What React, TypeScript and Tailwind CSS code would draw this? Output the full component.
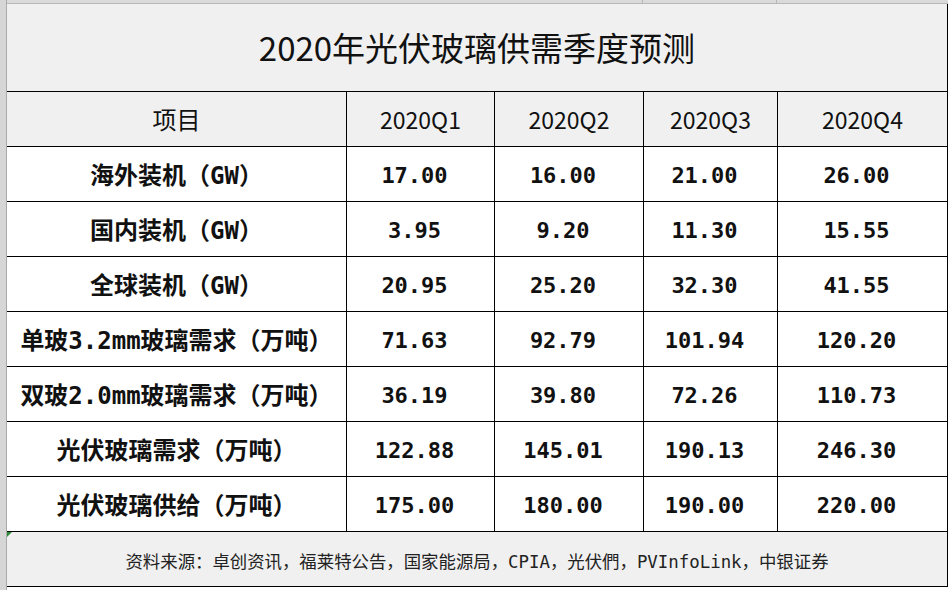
const cols = ['w-[340px]', 'w-[148px]', 'w-[149px]', 'w-[134px]', 'w-[170px]']

const quarters = ['2020Q1', '2020Q2', '2020Q3', '2020Q4']

const rows: [string, string[]][] = [
  ['海外装机（GW）', ['17.00', '16.00', '21.00', '26.00']],
  ['国内装机（GW）', ['3.95', '9.20', '11.30', '15.55']],
  ['全球装机（GW）', ['20.95', '25.20', '32.30', '41.55']],
  ['单玻3.2mm玻璃需求（万吨）', ['71.63', '92.79', '101.94', '120.20']],
  ['双玻2.0mm玻璃需求（万吨）', ['36.19', '39.80', '72.26', '110.73']],
  ['光伏玻璃需求（万吨）', ['122.88', '145.01', '190.13', '246.30']],
  ['光伏玻璃供给（万吨）', ['175.00', '180.00', '190.00', '220.00']],
]

const sans = "font-['Noto_Sans_CJK_SC',sans-serif]"
const mono = "font-['DejaVu_Sans_Mono','Noto_Sans_CJK_SC',monospace]"

export default function App() {
  return (
    <div className="w-[952px] h-[590px] bg-white flex overflow-hidden text-[#111]">
      {/* row header strip */}
      <div className="w-[7px] h-full bg-[#d6d6d6] border-r border-[#aaaaaa]" />

      <div className="w-[941px] flex flex-col">
        <div className="h-[4px] bg-[#dadada] border-b border-[#b8b8b8] flex">
          <div className="w-[636px] border-r border-[#b8b8b8]" />
          <div className="w-[134px] border-r border-[#b8b8b8]" />
        </div>

        {/* title */}
        <div
          className={`h-[88px] bg-[#f0f0f0] border-b border-r border-black flex items-center justify-center text-[33px] ${sans}`}
        >
          2020年光伏玻璃供需季度预测
        </div>

        {/* header */}
        <div className="h-[55px] flex bg-[#f0f0f0] border-b border-black">
          <div className={`${cols[0]} border-r border-black flex items-center justify-center text-[24px] ${sans}`}>
            项目
          </div>
          {quarters.map((q, i) => (
            <div
              key={q}
              className={`${cols[i + 1]} border-r border-black flex items-center justify-center text-[23px] ${sans}`}
            >
              {q}
            </div>
          ))}
        </div>

        {rows.map(([label, vals]) => (
          <div key={label} className="h-[55px] flex bg-white border-b border-black">
            <div
              className={`${cols[0]} border-r border-black flex items-center justify-center pt-[3px] text-[24px] font-bold ${mono}`}
            >
              {label}
            </div>
            {vals.map((v, i) => (
              <div
                key={i}
                className={`${cols[i + 1]} border-r border-black flex items-center justify-center pt-[3px] pr-[12px] text-[22px] font-bold ${mono}`}
              >
                {v}
              </div>
            ))}
          </div>
        ))}

        {/* source */}
        <div
          className={`relative h-[55px] bg-[#f0f0f0] border-b border-r border-black flex items-center justify-center pt-[6px] text-[17.4px] text-[#222] ${mono}`}
        >
          <span className="absolute left-0 top-0 w-0 h-0 border-t-[5px] border-r-[5px] border-t-[#2e8b3a] border-r-transparent" />
          资料来源：卓创资讯，福莱特公告，国家能源局，CPIA，光伏們，PVInfoLink，中银证券
        </div>
      </div>
      <div className="flex-1 bg-white" />
    </div>
  )
}
